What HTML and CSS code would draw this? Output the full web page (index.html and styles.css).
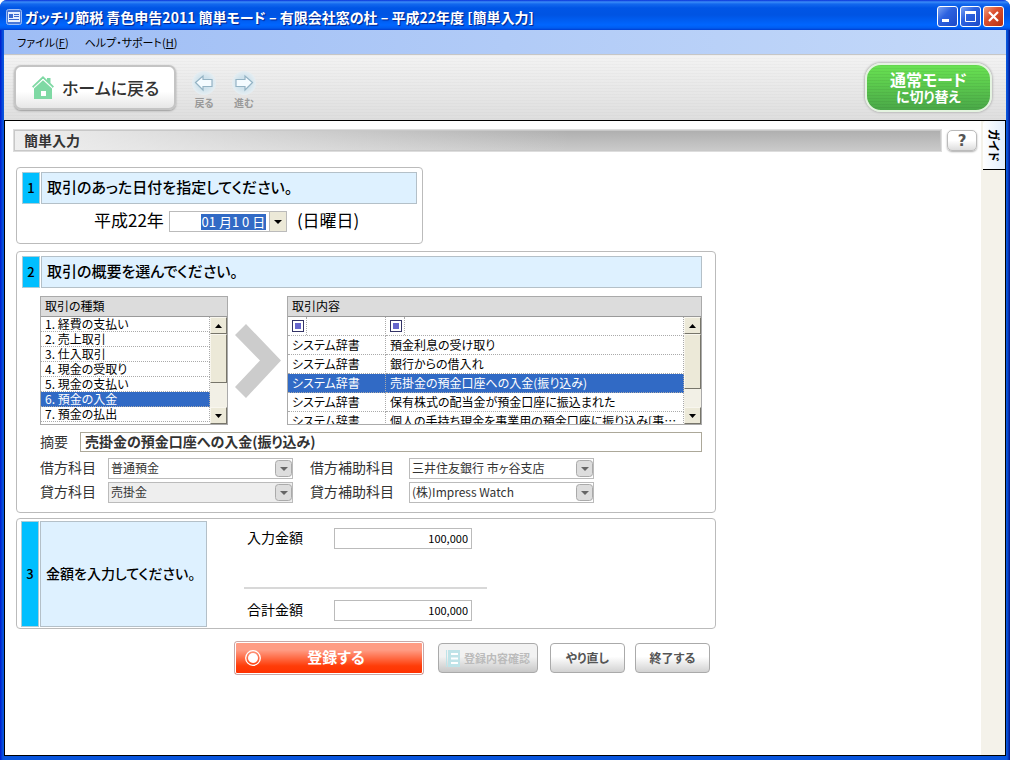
FILE: index.html
```html
<!DOCTYPE html>
<html lang="ja">
<head>
    <meta charset="UTF-8">
    <meta name="viewport" content="width=device-width, initial-scale=1.0">
    <title>ガッチリ節税 青色申告2011</title>
    <link rel="stylesheet" href="styles.css">
</head>
<body>
    <div class="window">
        <header class="titlebar">
            <svg class="app-icon" width="16" height="16" viewBox="0 0 16 16">
                <rect x="0.5" y="0.5" width="15" height="15" rx="2" fill="#4a78d8" stroke="#9dbcf5"/>
                <rect x="2" y="3" width="12" height="10" fill="#e8f0ff"/>
                <rect x="3" y="5" width="4" height="4" fill="#3c6ad0"/>
                <path d="M8 5.500h5M8 7.500h5M3 10.500h10" stroke="#3c6ad0"/>
            </svg>
            <h1>ガッチリ節税 青色申告2011 簡単モード – 有限会社窓の杜 – 平成22年度 [簡単入力]</h1>
            <div class="win-buttons">
                <button type="button" class="win-btn" aria-label="最小化">
                    <svg width="19" height="19"><rect x="4" y="12" width="7" height="3" fill="#fff"/></svg>
                </button>
                <button type="button" class="win-btn" aria-label="最大化">
                    <svg width="19" height="19"><path d="M4.500 5v9.500h10V5" fill="none" stroke="#fff"/><rect x="4" y="4" width="11" height="3" fill="#fff"/></svg>
                </button>
                <button type="button" class="win-btn win-close" aria-label="閉じる">
                    <svg width="19" height="19"><path d="M5 5l9 9M14 5l-9 9" stroke="#fff" stroke-width="2.200"/></svg>
                </button>
            </div>
        </header>

        <nav class="menubar">
            <a href="#">ファイル(<u>F</u>)</a>
            <a href="#">ヘルプ・サポート(<u>H</u>)</a>
        </nav>

        <div class="toolbar">
            <button type="button" class="home-btn">
                <svg width="22" height="23" viewBox="0 0 22 23">
                    <path d="M0 10.500L11 0l4 4V2h3.500v5L22 10.500 20.500 12 11 3 1.500 12z" fill="#7fd9a4"/>
                    <path d="M2 12.500L11 4.300l9 8.200V23H2z" fill="#7fd9a4"/>
                    <path d="M1.500 12L11 3l9.500 9" fill="none" stroke="#fff"/>
                    <rect x="9" y="15" width="5" height="5" fill="#fff"/>
                </svg>
                ホームに戻る
            </button>
            <button type="button" class="nav-btn" disabled>
                <svg width="24" height="24" viewBox="0 0 24 24">
                    <defs>
                        <radialGradient id="glow"><stop offset="0.5" stop-color="#cfe2ec"/><stop offset="1" stop-color="#e6eef2"/></radialGradient>
                    </defs>
                    <circle cx="12" cy="12" r="12" fill="url(#glow)"/>
                    <path d="M3.500 11.500L11 5v3.500h9v7h-9v3.500z" fill="#f4fbff" stroke="#94b3c4" stroke-width="1.200"/>
                </svg>
                戻る
            </button>
            <button type="button" class="nav-btn" disabled>
                <svg width="24" height="24" viewBox="0 0 24 24">
                    <circle cx="12" cy="12" r="12" fill="url(#glow)"/>
                    <path d="M20.500 11.500L13 5v3.500H4v7h9v3.500z" fill="#f4fbff" stroke="#94b3c4" stroke-width="1.200"/>
                </svg>
                進む
            </button>
            <button type="button" class="mode-btn"><span>通常モード</span><span class="mode-sub">に切り替え</span></button>
        </div>

        <div class="body">
            <main>
                <div class="page-head">
                    <h2>簡単入力</h2>
                    <button type="button" class="help-btn">?</button>
                </div>

                <form>
                    <section class="panel panel-date">
                        <div class="step">
                            <span class="step-no">1</span>
                            <h3>取引のあった日付を指定してください。</h3>
                        </div>
                        <div class="date-row">
                            <label for="date">平成22年</label>
                            <div class="date-box">
                                <input type="text" id="date" value="01 月1 0 日">
                                <button type="button" aria-label="カレンダー"><svg width="8" height="4"><path d="M0 0h8L4 4z"/></svg></button>
                            </div>
                            <span>(日曜日)</span>
                        </div>
                    </section>

                    <section class="panel panel-summary">
                        <div class="step">
                            <span class="step-no">2</span>
                            <h3>取引の概要を選んでください。</h3>
                        </div>
                        <div class="pickers">
                            <div class="grid grid-kind">
                                <h4>取引の種類</h4>
                                <div class="grid-body">
                                    <div class="grid-rows">
                                        <table>
                                            <tr><td>1. 経費の支払い</td></tr>
                                            <tr><td>2. 売上取引</td></tr>
                                            <tr><td>3. 仕入取引</td></tr>
                                            <tr><td>4. 現金の受取り</td></tr>
                                            <tr><td>5. 現金の支払い</td></tr>
                                            <tr class="selected"><td>6. 預金の入金</td></tr>
                                            <tr><td>7. 預金の払出</td></tr>
                                        </table>
                                    </div>
                                    <div class="scrollbar">
                                        <button type="button" aria-label="上へ"><svg width="7" height="4"><path d="M0 4h7L3.500 0z"/></svg></button>
                                        <div class="thumb"></div>
                                        <button type="button" aria-label="下へ"><svg width="7" height="4"><path d="M0 0h7L3.500 4z"/></svg></button>
                                    </div>
                                </div>
                            </div>
                            <svg class="arrow" width="46" height="74" viewBox="0 0 46 74">
                                <path d="M0 11L11 0l35 36.500L11 74 0 63l25-26.500z" fill="#ccc"/>
                            </svg>
                            <div class="grid grid-detail">
                                <h4>取引内容</h4>
                                <div class="grid-body">
                                    <div class="grid-rows">
                                        <table>
                                            <tr>
                                                <td class="dict"><span class="filter"><input type="checkbox" checked aria-label="辞書で絞り込み"></span></td>
                                                <td><span class="filter"><input type="checkbox" checked aria-label="内容で絞り込み"></span></td>
                                            </tr>
                                            <tr><td>システム辞書</td><td>預金利息の受け取り</td></tr>
                                            <tr><td>システム辞書</td><td>銀行からの借入れ</td></tr>
                                            <tr class="selected"><td>システム辞書</td><td>売掛金の預金口座への入金(振り込み)</td></tr>
                                            <tr><td>システム辞書</td><td>保有株式の配当金が預金口座に振込まれた</td></tr>
                                            <tr><td>システム辞書</td><td>個人の手持ち現金を事業用の預金口座に振り込み[事…</td></tr>
                                        </table>
                                    </div>
                                    <div class="scrollbar">
                                        <button type="button" aria-label="上へ"><svg width="7" height="4"><path d="M0 4h7L3.500 0z"/></svg></button>
                                        <div class="thumb thumb-long"></div>
                                        <button type="button" aria-label="下へ"><svg width="7" height="4"><path d="M0 0h7L3.500 4z"/></svg></button>
                                    </div>
                                </div>
                            </div>
                        </div>
                        <div class="memo-row">
                            <label for="memo">摘要</label>
                            <input type="text" id="memo" value="売掛金の預金口座への入金(振り込み)">
                        </div>
                        <div class="accounts">
                            <label for="debit">借方科目</label>
                            <div class="select-box">
                                <select id="debit"><option>普通預金</option></select>
                                <svg width="17" height="17"><rect class="drop" x="0.5" y="0.5" width="16" height="16" rx="3"/><path d="M5 7h8l-4 4z"/></svg>
                            </div>
                            <label for="debit-sub">借方補助科目</label>
                            <div class="select-box">
                                <select id="debit-sub"><option>三井住友銀行 市ヶ谷支店</option></select>
                                <svg width="17" height="17"><rect class="drop" x="0.5" y="0.5" width="16" height="16" rx="3"/><path d="M5 7h8l-4 4z"/></svg>
                            </div>
                            <label for="credit">貸方科目</label>
                            <div class="select-box">
                                <select id="credit" class="locked"><option>売掛金</option></select>
                                <svg width="17" height="17"><rect class="drop" x="0.5" y="0.5" width="16" height="16" rx="3"/><path d="M5 7h8l-4 4z"/></svg>
                            </div>
                            <label for="credit-sub">貸方補助科目</label>
                            <div class="select-box">
                                <select id="credit-sub"><option>(株)Impress Watch</option></select>
                                <svg width="17" height="17"><rect class="drop" x="0.5" y="0.5" width="16" height="16" rx="3"/><path d="M5 7h8l-4 4z"/></svg>
                            </div>
                        </div>
                    </section>

                    <section class="panel panel-amount">
                        <div class="step step-tall">
                            <span class="step-no">3</span>
                            <h3>金額を入力してください。</h3>
                        </div>
                        <div class="amounts">
                            <div class="amount-row">
                                <label for="amount">入力金額</label>
                                <input type="text" id="amount" value="100,000">
                            </div>
                            <hr>
                            <div class="amount-row">
                                <label for="total">合計金額</label>
                                <input type="text" id="total" value="100,000" readonly>
                            </div>
                        </div>
                    </section>

                    <div class="actions">
                        <button type="button" class="submit-btn">
                            <svg width="16" height="16" viewBox="0 0 16 16"><circle cx="8" cy="8" r="7.300" fill="none" stroke="#fff" stroke-width="1.300"/><circle cx="8" cy="8" r="5" fill="#fff"/></svg>
                            <span>登録する</span>
                        </button>
                        <button type="button" class="btn btn-check" disabled>
                            <svg width="14" height="17" viewBox="0 0 14 17"><path d="M0 0h1v17H0zM2 0h12v17H2z" fill="#bfe3e8"/><path d="M5 4h7M5 8.500h7M5 13h7" stroke="#fff" stroke-width="2"/></svg>
                            登録内容確認
                        </button>
                        <button type="button" class="btn">やり直し</button>
                        <button type="button" class="btn">終了する</button>
                    </div>
                </form>
            </main>

            <aside class="guide">
                <button type="button">ガイド</button>
            </aside>
        </div>
    </div>
</body>
</html>
```
FILE: styles.css
```css
* {
    box-sizing: border-box;
}
body {
    margin: 0;
    background: #fff;
    color: #000;
    font-family: "Noto Sans CJK JP", sans-serif;
    font-size: 12px;
    line-height: 16px;
    font-feature-settings: "palt";
}
h1, h2, h3, h4 {
    margin: 0;
}
button, input, select {
    font: inherit;
    font-feature-settings: inherit;
    color: inherit;
    margin: 0;
    padding: 0;
    border: 0;
    border-radius: 0;
}
svg {
    display: block;
    flex: none;
}

/* window frame */
.window {
    display: flex;
    flex-direction: column;
    min-height: 100vh;
    padding: 0 4px 4px;
    background: linear-gradient(90deg, #0019cf, #0855dd 3px, #0855dd calc(100% - 3px), #00138c);
    border-radius: 7px 7px 0 0;
    overflow: hidden;
}
.titlebar {
    display: flex;
    align-items: center;
    height: 30px;
    margin: 0 -4px;
    padding: 3px 6px 0 6px;
    background: linear-gradient(#0831d9, #3a8cf8 2px, #1368ee 4px, #0055e5 8px, #0054e3 15px, #0066ff 25px, #005cf0 28px, #003dd0);
}
.titlebar h1 {
    margin-left: 3px;
    color: #fff;
    font-size: 14px;
    font-weight: bold;
    text-shadow: 1px 1px 1px #00218a;
    white-space: nowrap;
}
.win-buttons {
    display: flex;
    gap: 2px;
    margin-left: auto;
}
.win-btn {
    width: 21px;
    height: 21px;
    border: 1px solid #fff;
    border-radius: 3px;
    background: linear-gradient(135deg, #7ba2f3, #2d62e0 40%, #1c49c8);
}
.win-close {
    background: linear-gradient(135deg, #f0a080, #dc5030 40%, #b83010);
}
.menubar {
    display: flex;
    gap: 16px;
    align-items: center;
    height: 24px;
    padding-left: 13px;
    background: linear-gradient(90deg, #9ebdf5, #c4d9f9);
    font-size: 11px;
}
.menubar a {
    color: #000;
    text-decoration: none;
}

/* toolbar */
.toolbar {
    display: flex;
    align-items: center;
    height: 66px;
    padding: 0 14px 0 10px;
    border-top: 1px solid #c6c6c6;
    background: repeating-linear-gradient(rgba(0, 0, 0, 0.02) 0 1px, transparent 1px 3px), linear-gradient(#f3f3f3, #dedede);
}
.home-btn {
    display: flex;
    align-items: center;
    gap: 8px;
    width: 162px;
    height: 45px;
    padding-left: 16px;
    border: 2px solid #c4c4c4;
    border-radius: 7px;
    background: linear-gradient(#fff 60%, #e6e6e6);
    box-shadow: 0 1px 2px #999;
    color: #333;
    font-size: 17px;
    font-weight: 500;
    white-space: nowrap;
}
.nav-btn {
    display: flex;
    flex-direction: column;
    align-items: center;
    gap: 1px;
    width: 24px;
    margin-top: 6px;
    margin-left: 16px;
    background: none;
    color: #999;
    font-size: 10px;
    font-weight: bold;
    line-height: 14px;
    white-space: nowrap;
}
.mode-btn {
    width: 127px;
    height: 49px;
    margin-left: auto;
    border: 2px solid #e4f3e0;
    border-radius: 16px;
    background: repeating-linear-gradient(rgba(0, 0, 0, 0.05) 0 1px, transparent 1px 3px), linear-gradient(#69e352, #4aa848);
    box-shadow: 0 0 2px 1px #bbb;
    color: #fff;
    font-size: 16px;
    font-weight: bold;
    line-height: 17px;
}
.mode-btn span {
    display: block;
}
.mode-btn .mode-sub {
    font-size: 14px;
}

/* page */
.body {
    display: flex;
    flex: 1;
    border: 1px solid #000;
    background: #fff;
}
main {
    flex: 1;
    min-width: 0;
    padding: 8px 4px 8px 8px;
}
.page-head {
    display: flex;
    align-items: center;
    gap: 5px;
    margin-bottom: 15px;
}
.page-head h2 {
    flex: 1;
    height: 23px;
    padding-left: 10px;
    border: 1px solid #ddd;
    outline: 1px solid #c8c8c8;
    outline-offset: -2px;
    background: linear-gradient(90deg, #efefef, rgba(239, 239, 239, 0) 60%), linear-gradient(#aeaeae, #cbcbcb);
    color: #333;
    font-size: 14px;
    line-height: 20px;
}
.help-btn {
    width: 30px;
    height: 21px;
    border: 1px solid #bbb;
    border-radius: 5px;
    background: linear-gradient(#fff 50%, #ddd);
    box-shadow: 0 1px 2px #aaa;
    color: #555;
    font-family: "DejaVu Sans", sans-serif;
    font-size: 15px;
    font-weight: bold;
    line-height: 18px;
}
.guide {
    width: 24px;
    padding-left: 2px;
    background: #f4f2ea;
}
.guide button {
    width: 22px;
    height: 49px;
    border-bottom: 1px solid #000;
    border-radius: 3px 0 0 0;
    background: linear-gradient(90deg, #fff, #e0edfc);
    font-size: 12px;
    font-weight: bold;
    writing-mode: vertical-rl;
    text-orientation: sideways;
}

.panel {
    max-width: 700px;
    margin: 0 0 7px 3px;
    padding: 4px 13px 9px 5px;
    border: 1px solid #bbb;
    border-radius: 4px;
}
.step {
    display: flex;
    gap: 1px;
    height: 32px;
}
.step-no {
    display: flex;
    align-items: center;
    justify-content: center;
    width: 18px;
    border: 1px solid #a8ccd8;
    background: #00bfff;
    font-size: 13px;
    font-weight: 500;
}
.step h3 {
    flex: 1;
    display: flex;
    align-items: center;
    padding: 0 0 2px 5px;
    border: 1px solid #b4c0c8;
    background: #def1ff;
    font-size: 15px;
    font-weight: 500;
    white-space: nowrap;
}
.panel-date {
    max-width: 407px;
    padding-right: 5px;
}
.date-row {
    display: flex;
    align-items: center;
    gap: 5px;
    padding: 7px 0 2px 72px;
    font-size: 17px;
}
.date-row label,
.date-row span {
    padding-bottom: 3px;
}
.date-row span {
    margin-left: 5px;
}
.date-box {
    display: flex;
    justify-content: flex-end;
    align-items: center;
    width: 118px;
    height: 21px;
    border: 1px solid #bbb;
}
.date-box input {
    width: 65px;
    height: 16px;
    margin-right: 3px;
    background: #316ac5;
    color: #fff;
    font-size: 13px;
    text-align: center;
}
.date-box button {
    display: flex;
    align-items: center;
    justify-content: center;
    width: 17px;
    height: 19px;
    border: 1px solid #bbb;
    border-width: 0 0 0 1px;
    background: #ece9d8;
}

/* pickers */
.pickers {
    display: flex;
    align-items: center;
    margin: 8px 0 7px 18px;
}
.arrow {
    margin: 0 6px 0 7px;
}
.grid {
    height: 129px;
    border: 1px solid #aaa;
}
.grid-kind {
    width: 188px;
}
.grid-detail {
    flex: 1;
    min-width: 0;
}
.grid h4 {
    height: 20px;
    padding-left: 4px;
    border-bottom: 1px solid #999;
    background: #dcdcdc;
    font-weight: normal;
    line-height: 18px;
}
.grid-body {
    display: flex;
    height: 107px;
}
.grid-rows {
    flex: 1;
    min-width: 0;
    overflow: hidden;
}
.grid table {
    width: 100%;
    table-layout: fixed;
    border-collapse: separate;
    border-spacing: 0;
}
.grid td {
    height: 19px;
    padding: 0 0 0 4px;
    border-bottom: 1px dotted #aaa;
    border-right: 1px dotted #aaa;
    line-height: 18px;
    white-space: nowrap;
}
.grid-kind td {
    height: 15px;
    line-height: 14px;
}
.grid .dict {
    width: 98px;
}
.grid .selected td {
    background: #316ac5;
    color: #fff;
}
.filter {
    display: flex;
    align-items: center;
    width: 15px;
    height: 18px;
    border-right: 1px dotted #aaa;
}
.filter input {
    appearance: none;
    width: 12px;
    height: 12px;
    padding: 2px;
    border: 1px solid #333366;
    background: #6666cc content-box;
}
.scrollbar {
    display: flex;
    flex-direction: column;
    width: 17px;
    background: #f2f0e6;
}
.scrollbar button,
.thumb {
    border: 1px solid;
    border-color: #f8f6ee #77756a #77756a #f8f6ee;
    background: #ece9d8;
}
.scrollbar button {
    display: flex;
    align-items: center;
    justify-content: center;
    height: 17px;
}
.scrollbar button:last-child {
    margin-top: auto;
}
.thumb {
    height: 49px;
}
.thumb-long {
    height: 55px;
}

/* journal fields */
.memo-row {
    display: flex;
    align-items: center;
    margin-left: 18px;
    color: #333;
    font-size: 14px;
}
.memo-row label {
    width: 40px;
    padding-bottom: 2px;
}
.memo-row input {
    flex: 1;
    min-width: 0;
    height: 20px;
    padding: 0 0 2px 4px;
    border: 1px solid #aca899;
    font-weight: bold;
}
.accounts {
    display: grid;
    grid-template-columns: 68px 185px 116px 185px;
    row-gap: 3px;
    align-items: center;
    margin: 6px 0 0 18px;
    color: #333;
    font-size: 14px;
}
.accounts label {
    padding-bottom: 3px;
    white-space: nowrap;
}
.accounts label:nth-of-type(even) {
    padding-left: 17px;
}
.select-box {
    position: relative;
}
.select-box select {
    display: block;
    width: 100%;
    height: 21px;
    padding: 0 20px 2px 2px;
    appearance: none;
    border: 1px solid #bbb;
    background: #fff;
    font-size: 12px;
}
.select-box .locked {
    background: #eee;
}
.select-box svg {
    position: absolute;
    top: 2px;
    right: 1px;
    fill: #666;
    pointer-events: none;
}
.select-box .drop {
    fill: #ddd;
    stroke: #aaa;
}

/* amounts */
.panel-amount {
    display: flex;
    height: 111px;
    margin-top: -2px;
    padding: 2px 4px 1px;
}
.step-tall {
    width: 186px;
    height: auto;
}
.step-tall h3 {
    font-size: 14px;
}
.amounts {
    width: 243px;
    margin-left: 37px;
    padding-top: 7px;
}
.amount-row {
    display: flex;
    align-items: center;
    padding: 0 15px 0 3px;
    font-size: 14px;
}
.amount-row label {
    width: 87px;
    padding-bottom: 3px;
}
.amount-row input {
    width: 138px;
    height: 21px;
    padding: 0 3px 2px 0;
    border: 1px solid #bbb;
    font-size: 11px;
    text-align: right;
}
.amounts hr {
    height: 2px;
    margin: 38px 0 11px;
    border: 0;
    background: #d8d8d8;
}

/* buttons */
.actions {
    display: flex;
    align-items: center;
    margin: 12px 0 0 221px;
}
.submit-btn {
    display: flex;
    align-items: center;
    width: 190px;
    height: 34px;
    padding-left: 10px;
    border: 1px solid #c8a8a8;
    outline: 1px solid #fff;
    outline-offset: -2px;
    border-radius: 3px;
    background: linear-gradient(#ff9c84 25%, #ff3c08 75%, #ff3000);
    color: #fff;
    font-size: 15px;
    font-weight: bold;
}
.submit-btn span {
    flex: 1;
    padding: 0 12px 2px 0;
}
.btn {
    display: flex;
    align-items: center;
    justify-content: center;
    width: 75px;
    height: 30px;
    margin-left: 10px;
    border: 1px solid #aaa;
    border-radius: 4px;
    background: linear-gradient(#fff 45%, #d2d2d2);
    color: #555;
    font-size: 12px;
    font-weight: bold;
    white-space: nowrap;
}
.btn-check {
    gap: 4px;
    width: 100px;
    margin-left: 14px;
    margin-right: 2px;
    background: linear-gradient(#f2f2f2 45%, #c8c8c8);
    color: #bbb;
    font-size: 11px;
}
```
